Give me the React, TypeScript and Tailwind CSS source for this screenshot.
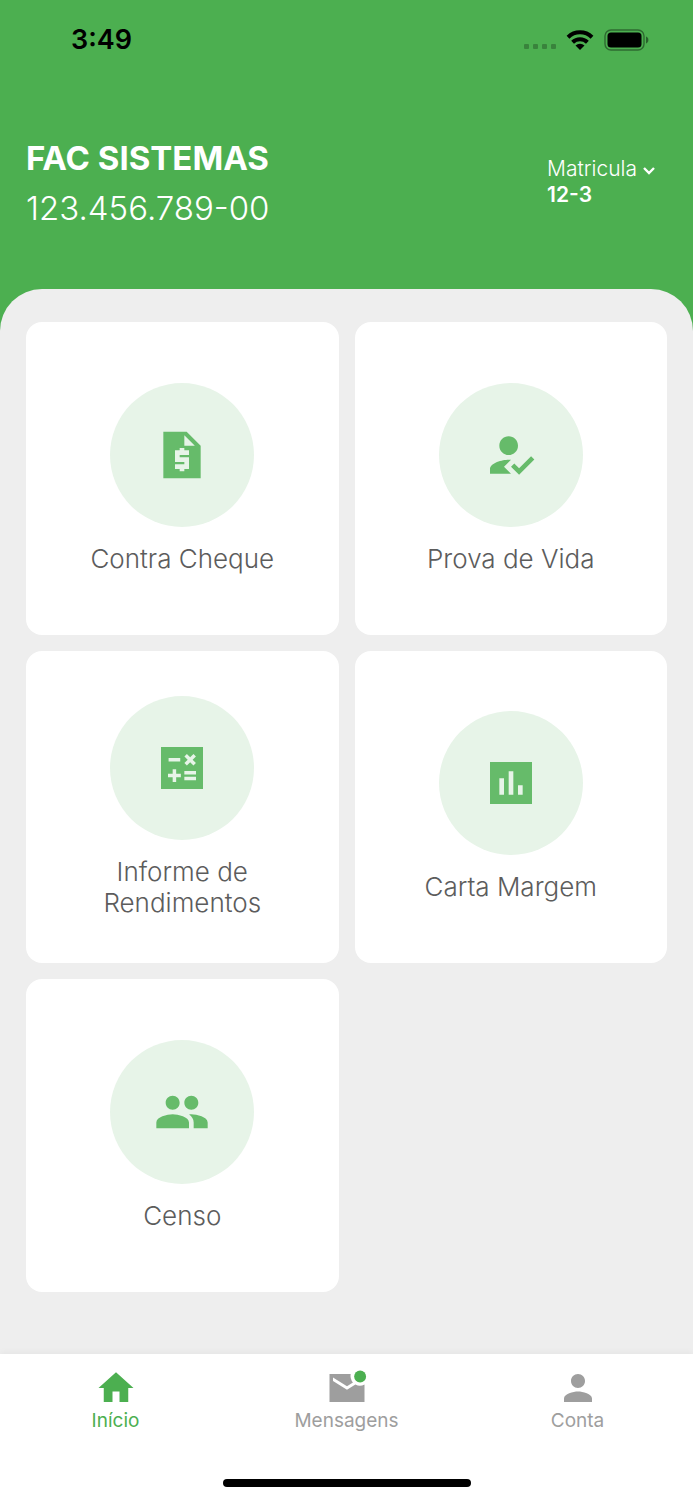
import type { ReactNode } from 'react';

const ICONS = {
  quote:
    'M14 2H4v20h16V8l-6-6zM15 12h-4v1h4v5h-2v1h-2v-1H9v-2h4v-1H9v-5h2V9h2v1h2v2zM13 8V3.5L17.5 8H13z',
  registered:
    'M9 17l3-2.94c-.39-.04-.68-.06-1-.06-2.67 0-8 1.34-8 4v2h9l-3-3zM11 12c2.21 0 4-1.79 4-4s-1.79-4-4-4-4 1.79-4 4 1.79 4 4 4zM15.47 20.5L12 17l1.4-1.41 2.07 2.08 5.13-5.17 1.4 1.41z',
  calculate:
    'M21 3H3v18h18V3zM13.03 7.06L14.09 6l1.41 1.41L16.91 6l1.06 1.06-1.41 1.41 1.41 1.41-1.06 1.06-1.41-1.41-1.41 1.41-1.06-1.06 1.41-1.41-1.41-1.41zM6.25 7.72h5v1.5h-5v-1.5zM11.5 16h-2v2H8v-2H6v-1.5h2v-2h1.5v2h2V16zM18 17.25h-5v-1.5h5v1.5zM18 14.75h-5v-1.5h5v1.5z',
  chart: 'M21 3H3v18h18V3zM9 17H7v-7h2v7zM13 17h-2V7h2v10zM17 17h-2v-4h2v4z',
  people:
    'M16 11c1.66 0 2.99-1.34 2.99-3S17.66 5 16 5s-3 1.34-3 3 1.34 3 3 3zM8 11c1.66 0 2.99-1.34 2.99-3S9.66 5 8 5 5 6.34 5 8s1.34 3 3 3zM8 13c-2.33 0-7 1.17-7 3.5V19h14v-2.5c0-2.33-4.67-3.5-7-3.5zM16 13c-.29 0-.62.02-.97.05 1.16.84 1.97 1.97 1.97 3.45V19h6v-2.5c0-2.33-4.67-3.5-7-3.5z',
  home: 'M10 20v-6h4v6h5v-8h3L12 3 2 12h3v8z',
  mail: 'M22 10V20H2V4h12.1a5.6 5.6 0 0 0 1.3 4.8L12 11 4 6v2l8 5 4.8-3a5.6 5.6 0 0 0 5.200 0z',
  person:
    'M12 12c2.21 0 4-1.79 4-4s-1.79-4-4-4-4 1.79-4 4 1.79 4 4 4zM12 14c-2.67 0-8 1.34-8 4v2h16v-2c0-2.66-5.33-4-8-4z',
};

function Icon({ path, className, children }: { path: string; className: string; children?: ReactNode }) {
  return (
    <svg viewBox="0 0 24 24" fill="currentColor" className={className} aria-hidden="true">
      <path fillRule="evenodd" d={path} />
      {children}
    </svg>
  );
}

function StatusBar() {
  return (
    <div className="flex h-20 items-center justify-between pr-11 pl-[71px] text-black">
      <span className="text-[27px] leading-8 font-semibold">3:49</span>
      <div className="flex items-center gap-2.5">
        <div className="flex gap-1 pt-3">
          {[0, 1, 2, 3].map((dot) => (
            <span key={dot} className="size-[5px] rounded-[1px] bg-black/25" />
          ))}
        </div>
        <svg viewBox="0 0 28 20" className="h-5 w-7" aria-hidden="true">
          <g fill="none" stroke="#000" strokeWidth="4">
            <path d="M2 7.200a17.200 17.200 0 0 1 24 0" />
            <path d="M6.600 12.200a10.600 10.600 0 0 1 14.800 0" />
          </g>
          <path d="M14 20l-4.500-4.500a6.400 6.400 0 0 1 9 0z" />
        </svg>
        <svg viewBox="0 0 45 22" className="h-[22px] w-[45px]" aria-hidden="true">
          <rect x="1" y="1" width="39" height="20" rx="6" fill="none" stroke="#000" strokeOpacity=".4" strokeWidth="1.4" />
          <rect x="3.5" y="3.5" width="34" height="15" rx="3.5" />
          <path d="M42 7.500c1.500.6 2.400 1.900 2.400 3.500s-.9 2.900-2.400 3.500z" fillOpacity=".45" />
        </svg>
      </div>
    </div>
  );
}

const services = [
  { label: 'Contra Cheque', icon: ICONS.quote },
  { label: 'Prova de Vida', icon: ICONS.registered },
  { label: 'Informe de Rendimentos', icon: ICONS.calculate },
  { label: 'Carta Margem', icon: ICONS.chart },
  { label: 'Censo', icon: ICONS.people },
];

const tabs = [
  { label: 'Início', icon: ICONS.home, active: true, unread: false },
  { label: 'Mensagens', icon: ICONS.mail, active: false, unread: true },
  { label: 'Conta', icon: ICONS.person, active: false, unread: false },
];

export default function App() {
  return (
    <div className="flex min-h-screen flex-col bg-[#4caf50] font-['Inter','Noto_Sans',sans-serif]">
      <StatusBar />
      <header className="flex items-center justify-between px-[26px] pt-[53px] pb-[56px] text-white">
        <div>
          <h1 className="text-[33px] leading-[50px] font-bold">FAC SISTEMAS</h1>
          <p className="text-[33px] leading-[50px] font-light">123.456.789-00</p>
        </div>
        <button type="button" className="mr-3 pb-0.5 text-left text-[21px] leading-[26px]">
          <span className="flex items-center gap-1.5 font-light">
            Matricula
            <svg viewBox="0 0 12 8" className="mt-1 h-2 w-3" fill="none" stroke="currentColor" strokeWidth="2.4" aria-hidden="true">
              <path d="M1 1l5 5 5-5" />
            </svg>
          </span>
          <span className="block font-semibold">12-3</span>
        </button>
      </header>

      <main className="grow rounded-t-[42px] bg-[#eeeeee] px-[26px] pt-[33px] pb-[60px]">
        <div className="grid grid-cols-2 gap-4">
          {services.map((service) => (
            <button
              key={service.label}
              type="button"
              className="flex aspect-square flex-col items-center justify-center gap-4 rounded-2xl bg-white"
            >
              <span className="flex size-36 items-center justify-center rounded-full bg-[#e7f4e8] text-[#66bb6a]">
                <Icon path={service.icon} className="size-14" />
              </span>
              <span className="max-w-[200px] text-[26px] leading-[31px] font-light text-[#5c5c5c]">{service.label}</span>
            </button>
          ))}
        </div>
      </main>

      <footer className="bg-white pb-[13px] shadow-[0_-2px_6px_rgba(0,0,0,0.04)]">
        <nav className="grid grid-cols-3">
          {tabs.map((tab) => (
            <a
              key={tab.label}
              href="#"
              aria-current={tab.active ? 'page' : undefined}
              className={`flex flex-col items-center pt-[13px] text-[19px] leading-6 ${tab.active ? 'text-[#4caf50]' : 'text-[#9e9e9e]'}`}
            >
              <Icon path={tab.icon} className="size-[42px] overflow-visible">
                {tab.unread && <circle cx="19.5" cy="5.4" r="3.4" fill="#4caf50" />}
              </Icon>
              {tab.label}
            </a>
          ))}
        </nav>
        <div className="mx-auto mt-[46px] h-2 w-[248px] rounded-full bg-black" />
      </footer>
    </div>
  );
}
